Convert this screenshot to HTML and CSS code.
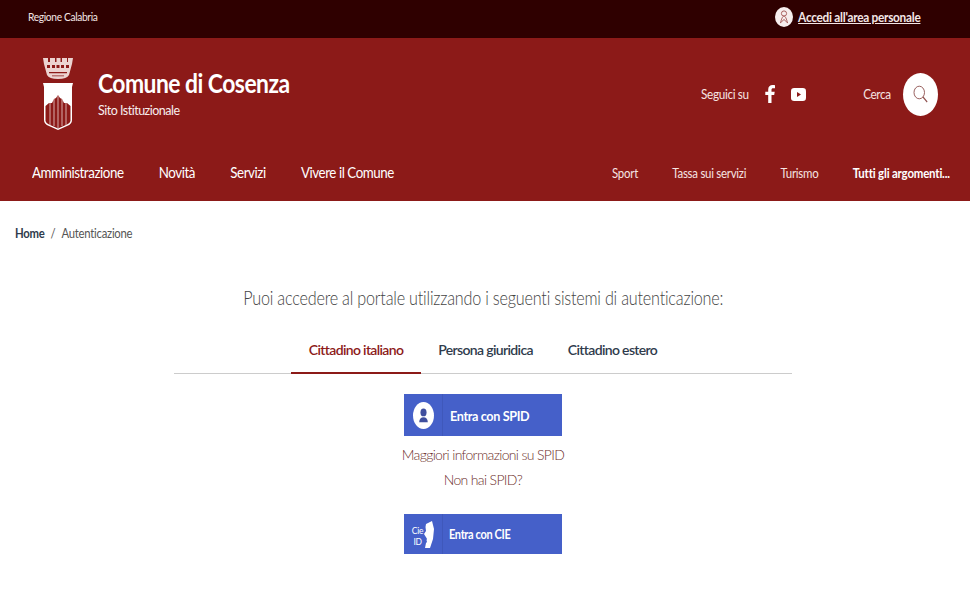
FILE: index.html
```html
<!DOCTYPE html>
<html lang="it">
<head>
  <meta charset="UTF-8" />
  <title>Comune di Cosenza - Autenticazione</title>
  <meta name="viewport" content="width=device-width, initial-scale=1.0"/>
  <link rel="stylesheet" href="styles.css">
</head>
<body>

<div class="top-bar">
  <a class="region" href="#">Regione Calabria</a>
  <a class="login" href="#">
    <span class="login-icon">
      <svg width="18" height="20" viewBox="0 0 18 20" fill="none" stroke="#a9605e" stroke-width="1">
        <circle cx="9" cy="6.500" r="2.600"/>
        <path d="M9 9.100c-1.500 0-2.500 3-3.600 6.900M9 9.100c1.500 0 2.500 3 3.600 6.900M5.700 15.600 9 12.500l3.300 3.100"/>
      </svg>
    </span>
    <span class="login-text">Accedi all'area personale</span>
  </a>
</div>

<header class="main-header">
  <div class="brand-row">
    <div class="brand">
      <svg class="crest" width="30" height="74" viewBox="0 0 30 74">
        <!-- corona -->
        <path fill="#ecd3d0" d="M0 1h5v4h2V1h5v4h1.500V1h4v4H19V1h5v4h1V1h5l-1 6-3 11q-2 4-11 4T4 18L1 7z"/>
        <path fill="#8c1a18" d="M4 8h3v3H4zM9 8h3v3H9zM13.500 8h3v3h-3zM18 8h3v3h-3zM23 8h3v3h-3zM6 15h18v1.200H6zM9 18.500h12v.8H9z"/>
        <!-- scudo -->
        <path fill="#fff" d="M0 26h30l-1 4v33q0 4-5 6l-9 4-9-4q-5-2-5-6V30z"/>
        <path fill="#8c1a18" d="M2.500 64V49L6 46h3l2-4 2-1 2-3 2 3 2 1 2 4h3l3.500 3v15q-.5 2-3.500 3.500l-9 4-9-4Q3 66 2.500 64z"/>
        <path stroke="#ecd3d0" stroke-width=".8" fill="none" d="M7 46v22M11 42v27M15 38v33M19 42v27M23 46v22"/>
      </svg>
      <div class="brand-text">
        <h1>Comune di Cosenza</h1>
        <p>Sito Istituzionale</p>
      </div>
    </div>
    <div class="tools">
      <span class="tool-label">Seguici su</span>
      <a class="social" href="#" aria-label="Facebook">
        <svg width="10" height="18" viewBox="0 0 10 18" fill="#fff">
          <path d="M6.500 18V10h2.700l.5-3.200H6.500V4.900c0-1 .4-1.600 1.700-1.600H10V.3C9.500.2 8.600 0 7.600 0 5 0 3.200 1.600 3.200 4.400v2.400H.3V10h2.900v8z"/>
        </svg>
      </a>
      <a class="social" href="#" aria-label="YouTube">
        <svg width="15" height="13" viewBox="0 0 15 13">
          <rect width="15" height="13" rx="3.200" fill="#fff"/>
          <path d="M6 4v5l4-2.500z" fill="#8c1a18"/>
        </svg>
      </a>
      <span class="tool-label search-label">Cerca</span>
      <button class="search-btn" aria-label="Cerca">
        <svg width="15" height="18" viewBox="0 0 18 18" preserveAspectRatio="none" fill="none" stroke="#8f5250" stroke-width="1">
          <circle cx="7.500" cy="7.500" r="6.300"/>
          <path d="M12 12 17 17" stroke-width="1.400"/>
        </svg>
      </button>
    </div>
  </div>
  <nav class="nav-row">
    <ul class="nav-main">
      <li>Amministrazione</li>
      <li>Novità</li>
      <li>Servizi</li>
      <li>Vivere il Comune</li>
    </ul>
    <ul class="nav-topics">
      <li>Sport</li>
      <li>Tassa sui servizi</li>
      <li>Turismo</li>
      <li class="all-topics">Tutti gli argomenti...</li>
    </ul>
  </nav>
</header>

<div class="breadcrumb">
  <a href="#">Home</a>
  <span class="sep">/</span>
  <span class="current">Autenticazione</span>
</div>

<main class="auth">
  <h2>Puoi accedere al portale utilizzando i seguenti sistemi di autenticazione:</h2>

  <ul class="tabs">
    <li class="tab active">Cittadino italiano</li>
    <li class="tab">Persona giuridica</li>
    <li class="tab">Cittadino estero</li>
  </ul>

  <a class="auth-btn spid" href="#">
    <span class="auth-icon">
      <svg width="21" height="27" viewBox="0 0 22 22" preserveAspectRatio="none">
        <circle cx="11" cy="11" r="11" fill="#fff"/>
        <circle cx="11" cy="8.500" r="3.200" fill="#3f4f9e"/>
        <path d="M6.500 16.500c0-2.800 2-4 4.500-4s4.500 1.200 4.500 4z" fill="#3f4f9e"/>
      </svg>
    </span>
    <span class="auth-label">Entra con SPID</span>
  </a>
  <a class="auth-link first" href="#">Maggiori informazioni su SPID</a>
  <a class="auth-link" href="#">Non hai SPID?</a>

  <a class="auth-btn cie" href="#">
    <span class="auth-icon">
      <span class="cie-text">Cie<br>ID</span>
      <svg width="10" height="27" viewBox="0 0 10 27">
        <path fill="#fff" d="M2 3 8 0l2 8-1 10-3 9H1l1-5 1-1-.5-2 .5-1-.5-1L0 13l2-3-.5-4z"/>
      </svg>
    </span>
    <span class="auth-label">Entra con CIE</span>
  </a>
</main>

</body>
</html>
```

FILE: styles.css
```css
* {
  box-sizing: border-box;
}

body {
  margin: 0;
  padding: 0;
  font-family: 'Lato', 'Open Sans', sans-serif;
  background-color: #fff;
  color: #333;
}

a {
  color: inherit;
  text-decoration: none;
}

ul {
  list-style: none;
  margin: 0;
  padding: 0;
}

/* barra superiore */
.top-bar {
  height: 38px;
  background-color: #2f0000;
  color: #f3e6e6;
  display: flex;
  justify-content: space-between;
  align-items: center;
  padding: 0 50px 5px 28px;
}

.region {
  font-size: 12px;
  letter-spacing: -0.4px;
  transform: scaleX(0.85);
  transform-origin: left;
}

.login {
  display: flex;
  align-items: center;
}

.login-icon {
  width: 18px;
  height: 20px;
  border-radius: 50%;
  background-color: #f7eeee;
  display: flex;
}

.login-text {
  margin-left: -7px;
  font-size: 13px;
  font-weight: 700;
  letter-spacing: -0.3px;
  text-decoration: underline;
  transform: scaleX(0.91);
  transform-origin: right;
}

/* testata */
.main-header {
  height: 163px;
  background-color: #8c1a18;
  color: #fff;
  padding-top: 19px;
}

.brand-row {
  display: flex;
  justify-content: space-between;
  height: 74px;
  padding: 0 32px 0 43px;
}

.brand {
  display: flex;
  align-items: flex-start;
  gap: 25px;
}

.brand-text {
  padding-top: 10px;
}

.brand-text h1 {
  margin: 0;
  font-size: 26px;
  line-height: 32px;
  font-weight: 700;
  letter-spacing: -0.6px;
  transform: scaleX(0.88);
  transform-origin: left;
}

.brand-text p {
  margin: 4px 0 0;
  font-size: 12.500px;
  line-height: 16px;
  letter-spacing: -0.5px;
  color: #f7eeee;
}

.tools {
  display: flex;
  align-items: center;
  height: 74px;
  font-size: 13.500px;
  letter-spacing: -0.4px;
  color: #f6e4e2;
}

.tool-label {
  transform: scaleX(0.87);
  transform-origin: right;
}

.social {
  display: flex;
  margin-left: 16px;
}

.search-label {
  margin-left: 53px;
}

.search-btn {
  width: 35px;
  height: 43px;
  margin-left: 12px;
  border: none;
  border-radius: 50%;
  background-color: #fff;
  display: flex;
  align-items: center;
  justify-content: center;
  padding: 0;
}

.nav-row {
  display: flex;
  justify-content: space-between;
  align-items: center;
  padding: 32px 20px 0 32px;
}

.nav-main,
.nav-topics {
  display: flex;
  align-items: center;
}

.nav-main {
  gap: 41px;
  font-size: 15.500px;
  letter-spacing: -0.5px;
  transform: scaleX(0.86);
  transform-origin: left;
}

.nav-topics {
  gap: 39px;
  padding-top: 2px;
  font-size: 13px;
  letter-spacing: -0.3px;
  color: #f6e4e2;
  transform: scaleX(0.88);
  transform-origin: right;
}

.all-topics {
  font-weight: 700;
  letter-spacing: -0.2px;
  color: #fff;
}

/* briciole */
.breadcrumb {
  display: flex;
  gap: 7px;
  margin: 24px 0 0 15px;
  font-size: 13px;
  line-height: 17px;
  letter-spacing: -0.3px;
  color: #555;
  transform: scaleX(0.87);
  transform-origin: left;
}

.breadcrumb a {
  font-weight: 700;
  color: #2f3b4c;
}

/* contenuto */
.auth {
  display: flex;
  flex-direction: column;
  align-items: center;
  padding-right: 4px;
}

.auth h2 {
  margin: 42px 0 0;
  font-size: 19.500px;
  line-height: 28px;
  font-weight: 300;
  letter-spacing: -0.25px;
  color: #444;
  white-space: nowrap;
  transform: scaleX(0.83);
}

.tabs {
  display: flex;
  justify-content: center;
  width: 618px;
  margin-top: 18px;
  border-bottom: 1px solid #ccc;
}

.tab {
  padding: 0 17.500px;
  height: 43px;
  line-height: 40px;
  font-size: 14px;
  font-weight: 600;
  letter-spacing: -0.65px;
  color: #2f3b4c;
}

.tab.active {
  color: #8c1a18;
  border-bottom: 2px solid #8c1a18;
  margin-bottom: -1px;
  height: 44px;
}

.auth-btn {
  display: flex;
  align-items: center;
  width: 158px;
  margin-top: 20px;
  background-color: #4560c9;
  color: #fff;
  font-weight: 700;
  letter-spacing: -0.4px;
}

.auth-btn.spid {
  height: 42px;
  font-size: 14px;
}

.auth-btn.cie {
  height: 40px;
  margin-top: 22px;
  font-size: 12.500px;
}

.auth-icon {
  display: flex;
  align-items: center;
  justify-content: center;
  width: 39px;
  height: 100%;
  flex-shrink: 0;
  border-right: 1px solid #3f58bb;
}

.auth-label {
  margin-left: 7px;
  transform: scaleX(0.9);
  transform-origin: left;
}

.cie .auth-label {
  margin-left: 6px;
  transform: scaleX(0.88);
}

.cie-text {
  font-size: 8.500px;
  line-height: 10.500px;
  font-weight: 400;
  letter-spacing: -0.3px;
  text-align: center;
  padding-top: 5px;
  margin-right: 1px;
}

.auth-link {
  font-size: 14px;
  line-height: 25px;
  font-weight: 300;
  letter-spacing: -0.65px;
  color: #6d2f2c;
}

.auth-link.first {
  margin-top: 6px;
}
```
